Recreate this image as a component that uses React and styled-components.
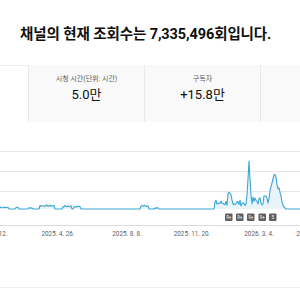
import React from "react";
import styled, { createGlobalStyle } from "styled-components";

const Global = createGlobalStyle`
  html, body { margin: 0; padding: 0; background: #fff; }
  body { font-family: Roboto, "Noto Sans CJK KR", sans-serif; color: #0f0f0f; }
  #root { width: 300px; height: 300px; overflow: hidden; }
`;

const Page = styled.div`
  width: 300px;
  height: 300px;
  overflow: hidden;
  background: #fff;
`;

const Header = styled.div`
  height: 65px;
  display: flex;
  align-items: center;
  padding-left: 20px;
`;

const Title = styled.h1`
  margin: 0;
  font-size: 14.5px;
  font-weight: 700;
  letter-spacing: -0.1px;
  white-space: nowrap;
  color: #0f0f0f;
`;

const Tabs = styled.div`
  display: flex;
  margin-left: -88px;
  height: 57px;
`;

const Tab = styled.div`
  flex: 0 0 116px;
  height: 57px;
  box-sizing: border-box;
  background: ${(p) => (p.$active ? "#fff" : "#f9f9f9")};
  border-top: 1px solid ${(p) => (p.$active ? "#eeeeee" : "#f9f9f9")};
  border-left: ${(p) => (p.$first ? "none" : "1px solid #e8e8e8")};
  display: flex;
  flex-direction: column;
  align-items: center;
  padding-top: 9px;
  gap: 2px;
`;

const TabLabel = styled.div`
  font-size: 7px;
  line-height: 9px;
  color: #606060;
  white-space: nowrap;
`;

const TabValue = styled.div`
  font-size: 13px;
  line-height: 17px;
  color: #0f0f0f;
  white-space: nowrap;
`;

const Chart = styled.svg`
  display: block;
  width: 300px;
  height: 123px;
`;

const Divider = styled.div`
  margin-top: 42px;
  height: 1px;
  background: #efefef;
`;

function buildData() {
  let seed = 7;
  const rnd = () => {
    seed = (seed * 9301 + 49297) % 233280;
    return seed / 233280;
  };
  const base = 209;
  const pts = [];
  const bumps = [
    [0, 4, 2], [5, 8, 2], [16, 18, 2], [29, 32, 1.5], [40, 54, 4], [63, 71, 3.5],
    [74, 80, 3], [141, 148, 4], [155, 158, 1.5],
  ];
  for (let x = -2; x <= 302; x += 1) {
    let y = base;
    for (const [a, b, h] of bumps) {
      if (x >= a && x <= b) y = base - h * (0.6 + 0.4 * rnd());
    }
    if (x >= 215 && x < 246) {
      y = base - (3 + rnd() * 6);
      if (x >= 228 && x <= 232) y = base - (9 + rnd() * 8);
    }
    if (x >= 246 && x <= 252) {
      const t = Math.abs(x - 249);
      y = base - [48, 30, 14, 5][t];
    }
    if (x > 252 && x < 270) {
      y = base - (4 + rnd() * 8);
      if (x >= 264 && x <= 266) y = base - 13;
    }
    if (x >= 270 && x <= 286) {
      const prof = { 270: 18, 271: 22, 272: 26, 273: 30, 274: 33, 275: 33, 276: 30, 277: 24, 278: 19, 279: 21, 280: 16, 281: 12, 282: 7, 283: 4, 284: 2, 285: 1, 286: 0 };
      y = base - prof[x] - (x < 282 ? rnd() * 2 : 0);
    }
    pts.push([x, +y.toFixed(1)]);
  }
  return pts;
}

const data = buildData();
const line = data.map(([x, y], i) => `${i ? "L" : "M"}${x} ${y}`).join(" ");
const area = `${line} L302 209 L-2 209 Z`;

const grid = [151, 171, 191];
const badges = [
  { x: 225, t: "9+" },
  { x: 236, t: "9+" },
  { x: 247, t: "9+" },
  { x: 258.5, t: "9+" },
  { x: 269, t: "5" },
];
const labels = [
  { x: -9, t: "2025. 1. 12." },
  { x: 58, t: "2025. 4. 26." },
  { x: 127, t: "2025. 8. 8." },
  { x: 192, t: "2025. 11. 20." },
  { x: 259, t: "2026. 3. 4." },
  { x: 313, t: "2026. 6. 16." },
];

export default function App() {
  return (
    <Page>
      <Global />
      <Header>
        <Title>채널의 현재 조회수는 7,335,496회입니다.</Title>
      </Header>
      <Tabs>
        <Tab $active $first />
        <Tab>
          <TabLabel>시청 시간(단위: 시간)</TabLabel>
          <TabValue>5.0만</TabValue>
        </Tab>
        <Tab>
          <TabLabel>구독자</TabLabel>
          <TabValue>+15.8만</TabValue>
        </Tab>
        <Tab />
      </Tabs>
      <Chart viewBox="0 122 300 123">
        {grid.map((y) => (
          <line key={y} x1="0" x2="300" y1={y + 0.5} y2={y + 0.5} stroke="#e6e6e6" strokeWidth="1" />
        ))}
        <line x1="0" x2="300" y1="225.5" y2="225.5" stroke="#dcdcdc" strokeWidth="1" />
        <path d={area} fill="#e8f4fa" />
        <path d={line} fill="none" stroke="#3aa5d3" strokeWidth="1.1" strokeLinejoin="round" />
        {badges.map((b) => (
          <g key={b.x}>
            <rect x={b.x} y="213.5" width="7.5" height="7.5" rx="1" fill="#5f5f5f" />
            <text x={b.x + 3.75} y="219.2" textAnchor="middle" fontSize="4.5" fill="#fff" fontFamily="Roboto, sans-serif">
              {b.t}
            </text>
          </g>
        ))}
        {labels.map((l) => (
          <text key={l.t} x={l.x} y="235.8" textAnchor="middle" fontSize="6.3" fill="#606060" fontFamily="Roboto, sans-serif">
            {l.t}
          </text>
        ))}
      </Chart>
      <Divider />
    </Page>
  );
}
